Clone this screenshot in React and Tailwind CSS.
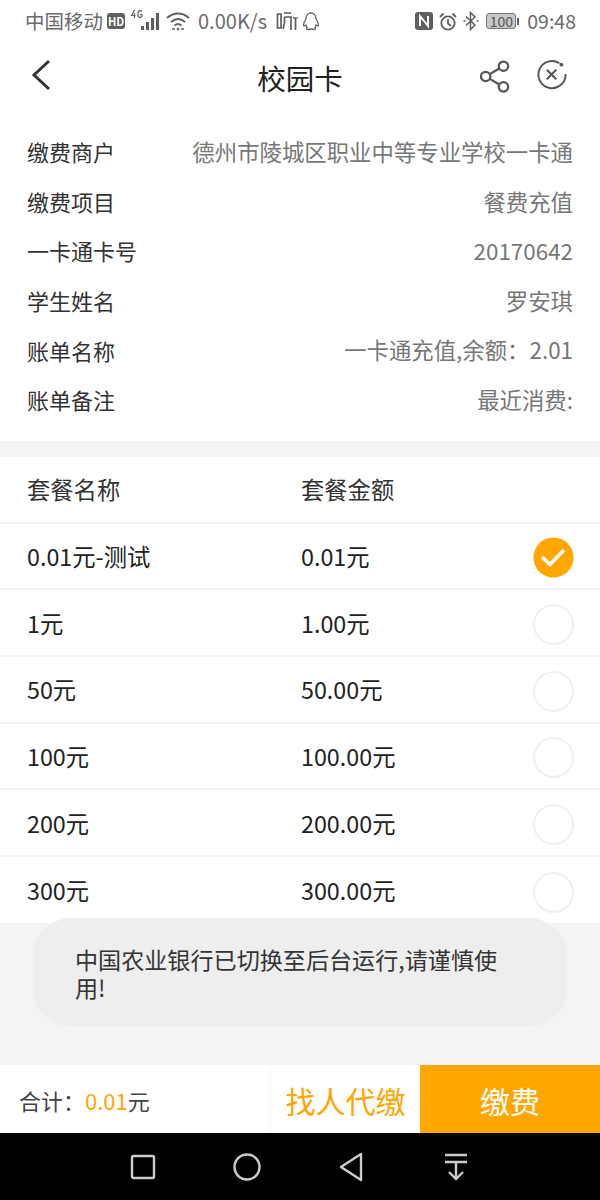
import React from 'react';

const infoRows = [
  ['缴费商户', '德州市陵城区职业中等专业学校一卡通'],
  ['缴费项目', '餐费充值'],
  ['一卡通卡号', '20170642'],
  ['学生姓名', '罗安琪'],
  ['账单名称', '一卡通充值,余额\uFF1A2.01'],
  ['账单备注', '最近消费:'],
];

const plans = [
  ['0.01元-测试', '0.01元', true],
  ['1元', '1.00元'],
  ['50元', '50.00元'],
  ['100元', '100.00元'],
  ['200元', '200.00元'],
  ['300元', '300.00元'],
];

const StatusBar = () => (
  <div className="h-[42px] pl-[25px] pr-[24px] flex items-center text-[19.500px] text-[#6b6b6b] leading-none">
    <span>中国移动</span>
    {/* HD */}
    <span className="ml-[4px] w-[18px] h-[16px] rounded-[3px] bg-[#5f5f5f] text-white text-[11px] font-bold flex items-center justify-center">HD</span>
    {/* 4G signal */}
    <svg className="ml-[6px]" width="30" height="24" viewBox="0 0 30 24" fill="#5f5f5f">
      <path d="M3.500 1L.5 6.500h4M3.500 4v5" fill="none" stroke="#5f5f5f" strokeWidth="1.200" />
      <path d="M11 2.500C10 1 7 1 6.800 5c-.1 4 3.200 4 4.200 2.500V5.500H9" fill="none" stroke="#5f5f5f" strokeWidth="1.200" />
      <rect x="10" y="17" width="3" height="4" />
      <rect x="15" y="13" width="3" height="8" />
      <rect x="20" y="9" width="3" height="12" />
      <rect x="25" y="4" width="3" height="17" />
    </svg>
    {/* wifi */}
    <svg className="ml-[5px]" width="24" height="24" viewBox="0 0 24 24" fill="none" stroke="#5f5f5f" strokeWidth="1.900">
      <path d="M1 9c6.500-6 15.500-6 22 0" />
      <path d="M5 13c4.500-4 9.500-4 14 0" />
      <path d="M8.500 16.500c2.500-2 4.500-2 7 0" />
      <circle cx="12" cy="20" r="1.300" fill="#5f5f5f" stroke="none" />
      <path d="M6 20h3M15 20h3" strokeWidth="1.600" />
    </svg>
    <span className="ml-[8px] text-[20px]">0.00K/s</span>
    {/* listen app */}
    <svg className="ml-[9px]" width="22" height="22" viewBox="0 0 22 22" fill="none" stroke="#5f5f5f" strokeWidth="1.700">
      <path d="M1.500 4h3.500v14H1.500zM8 3h7M8.500 7h6.500v13M8.500 7v6l-1.500 6M17 8h4.500M19.500 8v12" />
    </svg>
    {/* qq penguin */}
    <svg className="ml-[4px]" width="18" height="20" viewBox="0 0 18 20" fill="none" stroke="#5f5f5f" strokeWidth="1.300">
      <path d="M4 8c0-8 10-8 10 0 2 3 3 6 2 7l-2-1c0 1-.5 2-1 2.500 1 .5 1 2-1 2-1 0-2-.5-3-.5s-2 .5-3 .5c-2 0-2-1.500-1-2-.5-.5-1-1.500-1-2.500l-2 1c-1-1 0-4 2-7z" />
    </svg>
    <div className="ml-auto flex items-center">
      {/* nfc */}
      <svg width="18" height="18" viewBox="0 0 18 18">
        <rect x="0" y="0" width="18" height="18" rx="3" fill="#5f5f5f" />
        <path d="M5 14V4l8 10V4" fill="none" stroke="#fff" strokeWidth="2" />
      </svg>
      {/* alarm */}
      <svg className="ml-[6px]" width="18" height="19" viewBox="0 0 18 19" fill="none" stroke="#5f5f5f" strokeWidth="1.800">
        <circle cx="9" cy="11" r="6.700" />
        <path d="M9 7v4.500l3 2.500M1 5l3.500-3.500M17 5l-3.500-3.500" />
      </svg>
      {/* bluetooth */}
      <svg className="ml-[6px]" width="16" height="20" viewBox="0 0 16 20" fill="none" stroke="#5f5f5f" strokeWidth="1.500">
        <path d="M3 5.500l9 8.500-4.500 4.500V1.500L12 6l-9 8.500" />
        <path d="M.5 10h2M13.500 10h2" />
      </svg>
      {/* battery */}
      <div className="ml-[7px] w-[30px] h-[16px] rounded-[3px] border border-[#777] bg-[#c9c9c9] text-[#555] text-[14px] flex items-center justify-center">100</div>
      <div className="ml-[1px] w-[2px] h-[7px] bg-[#5f5f5f]" />
      <span className="ml-[8px] text-[19.500px]">09:48</span>
    </div>
  </div>
);

const Header = () => (
  <div className="h-[68px] pl-[29px] pr-[33px] flex items-center justify-between relative">
    <svg className="mb-[3px]" width="24" height="32" viewBox="0 0 24 32" fill="none" stroke="#333" strokeWidth="3">
      <path d="M20 2L5 16l15 14" />
    </svg>
    <span className="absolute left-0 right-0 top-[18px] text-center text-[28.500px] leading-[36px] text-[#222]">校园卡</span>
    <div className="flex items-center gap-[27px] mb-[2px]">
      <svg className="mt-[2px]" width="30" height="33" viewBox="0 0 32 34" fill="none" stroke="#555" strokeWidth="2.400">
        <circle cx="6" cy="17" r="5" />
        <circle cx="25" cy="6" r="5" />
        <circle cx="25" cy="28" r="5" />
        <path d="M10.500 14.500L20.500 8.500M10.500 19.500L20.500 25.500" />
      </svg>
      <svg width="30" height="30" viewBox="0 0 32 32" fill="none" stroke="#555" strokeWidth="2">
        <path d="M24 3.500A14.500 14.500 0 1 0 30.500 15" />
        <path d="M10.500 10.500l10 10M20.500 10.500l-10 10" strokeWidth="2.200" />
        <circle cx="26" cy="5" r="2" fill="#555" stroke="none" />
      </svg>
    </div>
  </div>
);

const PlanRow = ({ name, amount, checked, last }) => (
  <div className={`pl-[27px] pr-[26px] flex items-center text-[23.300px] text-[#222] ${last ? 'h-[66px]' : 'h-[66.700px] border-b-2 border-[#f4f4f4]'}`}>
    <span className="w-[274px] pt-[1px]">{name}</span>
    <span className="pt-[1px]">{amount}</span>
    {checked ? (
      <svg className="ml-auto mt-[4px]" width="41" height="41" viewBox="0 0 41 41">
        <circle cx="20.500" cy="20.500" r="20" fill="#ffa600" />
        <path d="M9 20l8 7.500L31 13" fill="none" stroke="#fff" strokeWidth="3.500" />
      </svg>
    ) : (
      <div className="ml-auto mt-[4px] w-[41px] h-[41px] rounded-full border-2 border-[#f0f0f0]" />
    )}
  </div>
);

export default function App() {
  return (
    <div className="w-[600px] h-[1200px] relative flex flex-col bg-white overflow-hidden font-['Noto_Sans_CJK_SC',sans-serif]">
      <StatusBar />
      <Header />

      {/* bill details */}
      <div className="pt-[17px] pb-[16px] pl-[27px] pr-[27px] flex flex-col">
        {infoRows.map(([label, value]) => (
          <div key={label} className="h-[49.600px] flex items-center justify-between text-[22px]">
            <span className="text-[#333]">{label}</span>
            <span className="text-[#777] text-[22.400px]">{value}</span>
          </div>
        ))}
      </div>

      <div className="h-[16px] bg-[#f4f4f4]" />

      {/* plans */}
      <div className="h-[67px] pl-[27px] flex items-center text-[23.300px] text-[#333] border-b-2 border-[#f4f4f4]">
        <span className="w-[274px]">套餐名称</span>
        <span>套餐金额</span>
      </div>
      {plans.map(([name, amount, checked], i) => (
        <PlanRow key={name} name={name} amount={amount} checked={checked} last={i === plans.length - 1} />
      ))}

      <div className="flex-1 bg-[#f4f4f4]" />

      {/* bottom action bar */}
      <div className="h-[68px] flex items-stretch bg-white">
        <div className="w-[271px] pl-[19px] pt-[2px] flex items-center text-[22px] text-[#444] border-r border-[#f6f6f6]">
          <span>{'合计\uFF1A'}</span>
          <span className="text-[#ffa600]">0.01</span>
          <span>元</span>
        </div>
        <div className="w-[149px] pt-[2px] flex items-center justify-center text-[30px] text-[#ffa600]">找人代缴</div>
        <div className="w-[180px] pt-[2px] flex items-center justify-center text-[30px] text-white bg-[#ffa600]">缴费</div>
      </div>

      {/* android nav */}
      <div className="h-[67px] bg-black flex items-center pl-[130px]">
        <svg width="26" height="26" viewBox="0 0 26 26" fill="none" stroke="#ccc" strokeWidth="2.400">
          <rect x="2" y="2" width="22" height="22" rx="1.500" />
        </svg>
        <svg className="ml-[76px]" width="30" height="30" viewBox="0 0 30 30" fill="none" stroke="#ccc" strokeWidth="2.400">
          <circle cx="15" cy="15" r="12.500" />
        </svg>
        <svg className="ml-[76px]" width="26" height="30" viewBox="0 0 26 30" fill="none" stroke="#ccc" strokeWidth="2.400">
          <path d="M23 2v26L3 15z" strokeLinejoin="round" />
        </svg>
        <svg className="ml-[79px]" width="26" height="30" viewBox="0 0 26 30" fill="none" stroke="#ccc" strokeWidth="2.400">
          <path d="M2 3h22M2 10h22M13 10v17M6 20l7 7 7-7" />
        </svg>
      </div>

      {/* toast */}
      <div className="absolute left-[33px] top-[918px] w-[534px] h-[109px] rounded-[38px] bg-[#eeeeee] pl-[42px] pr-[62px] pt-[27px] text-[23.100px] leading-[28px] text-[#333]">
        中国农业银行已切换至后台运行,请谨慎使用!
      </div>
    </div>
  );
}
